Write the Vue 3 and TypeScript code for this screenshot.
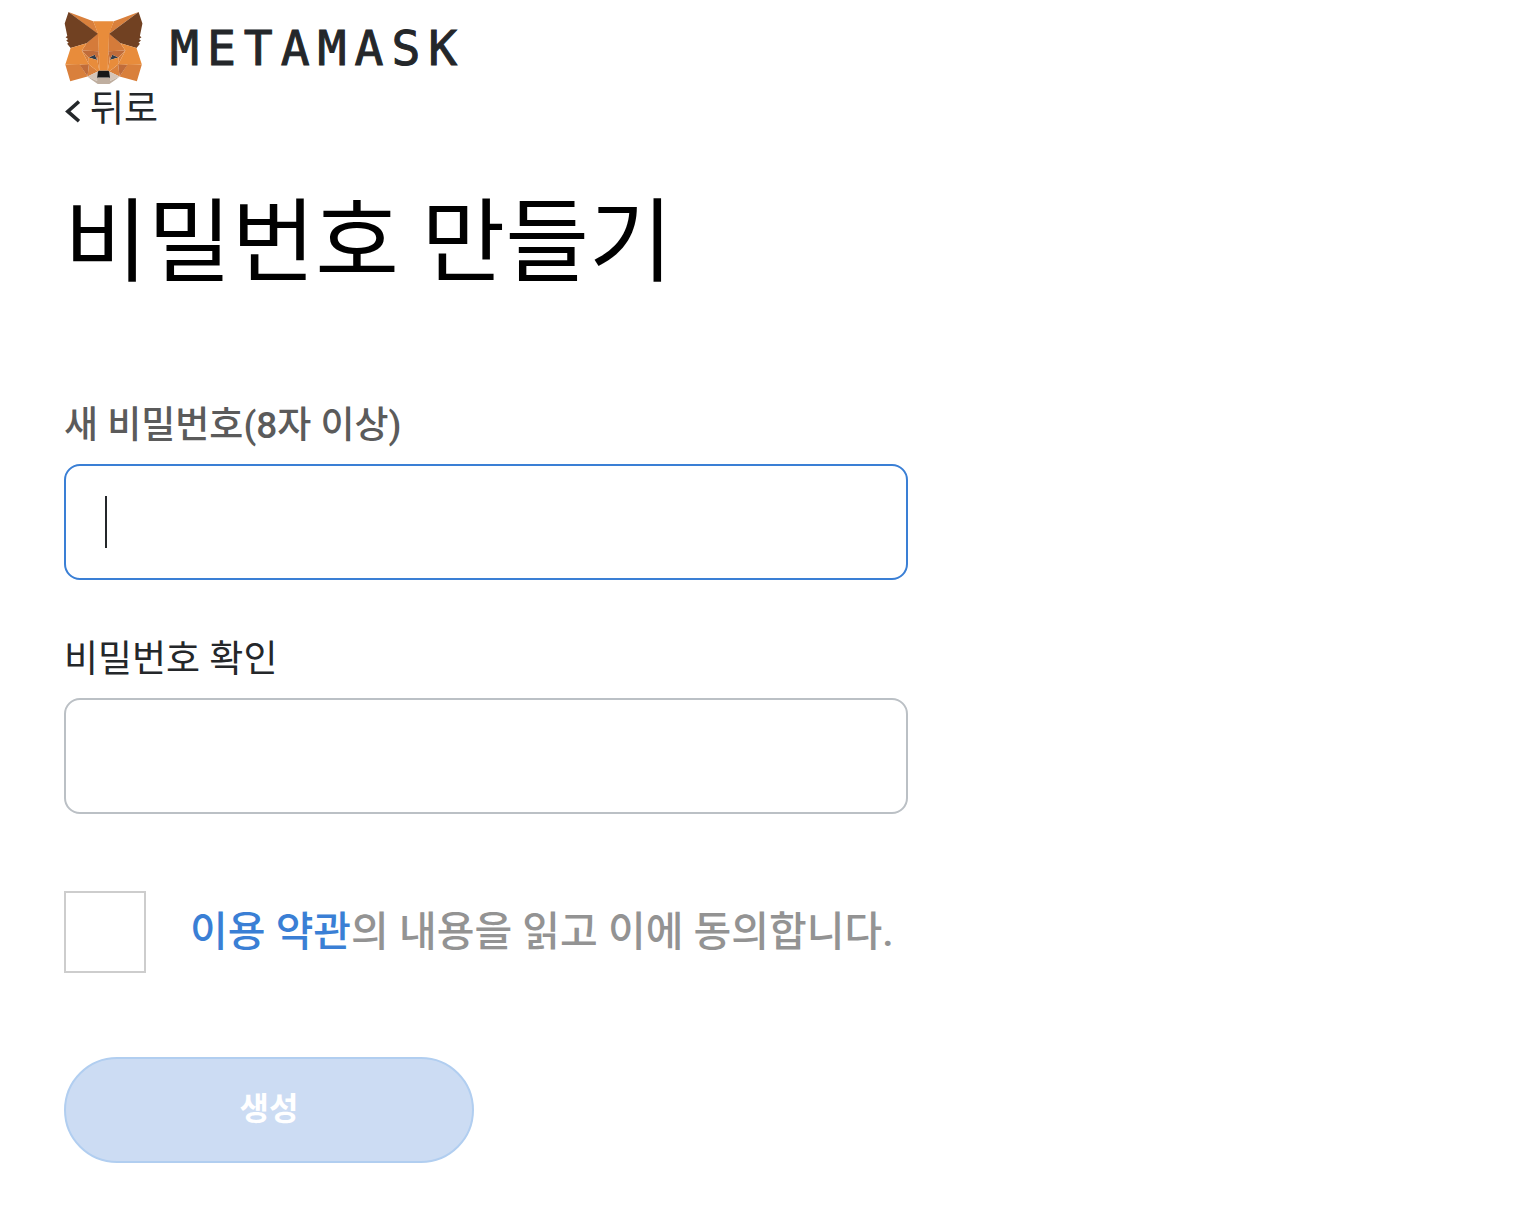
<script setup lang="ts">
import { ref } from 'vue'

interface Facet {
  fill: string
  d: string
}

const password = ref('')
const confirmPassword = ref('')
const accepted = ref(false)

const foxFacets: Facet[] = [
  { fill: '#d9803c', d: 'M32.96 1l-13.14 9.72 2.45-5.73L32.96 1z' },
  { fill: '#d9803c', d: 'M2.66 1l13.02 9.81-2.33-5.82L2.66 1z' },
  { fill: '#d9803c', d: 'M28.23 23.53l-3.5 5.34 7.49 2.06 2.14-7.28-6.13-.12z' },
  { fill: '#d9803c', d: 'M1.27 23.65l2.13 7.28 7.47-2.06-3.48-5.34-6.12.12z' },
  { fill: '#d57b3a', d: 'M10.47 14.51l-2.08 3.14 7.4.34-.24-7.97-5.08 4.49z' },
  { fill: '#d57b3a', d: 'M25.15 14.51l-5.16-4.58-.17 8.06 7.4-.34-2.07-3.14z' },
  { fill: '#d9803c', d: 'M10.87 28.87l4.49-2.16-3.86-3-.63 5.16z' },
  { fill: '#d9803c', d: 'M20.27 26.71l4.46 2.16-.6-5.17-3.86 3.01z' },
  { fill: '#d5c5b8', d: 'M24.73 28.87l-4.46-2.16.36 2.9-.04 1.23 4.14-1.97z' },
  { fill: '#d5c5b8', d: 'M10.87 28.87l4.16 1.97-.03-1.23.36-2.9-4.49 2.16z' },
  { fill: '#2f3d4b', d: 'M15.1 21.78l-3.72-1.09 2.63-1.2 1.09 2.29z' },
  { fill: '#2f3d4b', d: 'M20.51 21.78l1.09-2.29 2.64 1.2-3.73 1.09z' },
  { fill: '#c06c3a', d: 'M10.87 28.87l.65-5.34-4.13.12 3.48 5.22z' },
  { fill: '#c06c3a', d: 'M24.1 23.53l.63 5.34 3.5-5.22-4.13-.12z' },
  { fill: '#c06c3a', d: 'M27.2 17.65l-7.4.34.7 3.79 1.08-2.29 2.64 1.2 2.98-3.04z' },
  { fill: '#c06c3a', d: 'M11.38 20.69l2.63-1.2 1.09 2.29.68-3.79-7.4-.34 3 3.04z' },
  { fill: '#d9803c', d: 'M8.39 17.65l3.1 6.06-.11-3.02-3-3.04z' },
  { fill: '#d9803c', d: 'M24.24 20.69l-.12 3.02 3.1-6.06-2.98 3.04z' },
  { fill: '#d9803c', d: 'M15.78 17.99l-.68 3.79.87 4.48.19-5.9-.38-2.37z' },
  { fill: '#d9803c', d: 'M19.8 17.99l-.36 2.36.17 5.91.88-4.48-.7-3.79z' },
  { fill: '#e88c3b', d: 'M20.5 21.78l-.88 4.48.63.45 3.86-3 .12-3.02-3.73 1.09z' },
  { fill: '#e88c3b', d: 'M11.38 20.69l.1 3.02 3.87 3 .62-.45-.87-4.48-3.72-1.09z' },
  { fill: '#bfae9f', d: 'M20.6 30.84l.03-1.23-.34-.29h-4.98l-.31.29.03 1.23-4.16-1.97 1.46 1.19 2.96 2.04h5.05l2.97-2.04 1.44-1.19-4.15 1.97z' },
  { fill: '#171717', d: 'M20.27 26.71l-.63-.45h-3.66l-.62.45-.36 2.9.31-.29h4.98l.34.29-.36-2.9z' },
  { fill: '#714122', d: 'M33.52 11.35l1.1-5.36L32.96 1l-12.69 9.4 4.88 4.11 6.9 2.01 1.52-1.77-.66-.48 1.05-.96-.81-.62 1.06-.81-.7-.53z' },
  { fill: '#714122', d: 'M1 5.99l1.12 5.36-.71.53 1.06.8-.8.63 1.05.96-.67.48 1.52 1.77 6.9-2.01 4.88-4.11L2.66 1 1 5.99z' },
  { fill: '#e88c3b', d: 'M32.05 16.52l-6.9-2.01 2.07 3.14-3.1 6.06 4.1-.06h6.14l-2.31-7.13z' },
  { fill: '#e88c3b', d: 'M10.47 14.51l-6.9 2.01-2.3 7.13h6.12l4.1.06-3.1-6.06 2.08-3.14z' },
  { fill: '#e88c3b', d: 'M19.8 17.99l.44-7.64 2-5.4h-8.88l2 5.4.45 7.64.16 2.38.01 5.89h3.66l.02-5.89.14-2.38z' },
]
</script>

<template>
  <main class="page">
    <header class="brand">
      <svg class="fox" viewBox="1 1 34 32" aria-hidden="true">
        <path v-for="(facet, i) in foxFacets" :key="i" :fill="facet.fill" :d="facet.d" />
      </svg>
      <span class="wordmark">METAMASK</span>
    </header>

    <a class="back" href="#">
      <svg class="chevron" viewBox="0 0 16 28" aria-hidden="true">
        <path d="M15 5.6L3.8 15.4L15 25.2" fill="none" stroke="currentColor" stroke-width="3.6" />
      </svg>
      <span>뒤로</span>
    </a>

    <h1 class="title">비밀번호 만들기</h1>

    <form class="form" @submit.prevent>
      <div class="field">
        <label class="label label-active" for="new-password">새 비밀번호(8자 이상)</label>
        <div class="control">
          <input id="new-password" v-model="password" class="input input-active" type="password" />
          <span v-if="!password" class="caret" aria-hidden="true"></span>
        </div>
      </div>

      <div class="field">
        <label class="label" for="confirm-password">비밀번호 확인</label>
        <div class="control">
          <input id="confirm-password" v-model="confirmPassword" class="input" type="password" />
        </div>
      </div>

      <div class="terms">
        <input id="terms" v-model="accepted" class="checkbox" type="checkbox" />
        <label class="terms-text" for="terms"><a class="terms-link" href="#">이용 약관</a>의 내용을 읽고 이에 동의합니다.</label>
      </div>

      <button class="submit" type="submit" disabled>생성</button>
    </form>
  </main>
</template>

<style>
body {
  margin: 0;
  background: #fff;
}
</style>

<style scoped>
.page {
  box-sizing: border-box;
  padding: 12px 64px 46px;
  font-family: Roboto, "Noto Sans CJK KR", sans-serif;
  font-weight: 400;
  color: #24272a;
}

.brand {
  display: flex;
  align-items: flex-start;
  gap: 26px;
}

.fox {
  display: block;
  width: 80px;
  height: 74px;
}

.wordmark {
  font-family: "DejaVu Sans Mono", monospace;
  font-size: 48px;
  line-height: 72px;
  letter-spacing: 8px;
  -webkit-text-stroke: 1px currentColor;
}

.back {
  display: flex;
  align-items: center;
  gap: 10px;
  width: fit-content;
  font-size: 37px;
  line-height: 48px;
  color: inherit;
  text-decoration: none;
}

.chevron {
  width: 16px;
  height: 28px;
}

.title {
  margin: 55px 0 105px;
  font-size: 91px;
  line-height: 108px;
  font-weight: 400;
  color: #000;
}

.form {
  max-width: 844px;
}

.field {
  display: flex;
  flex-direction: column;
  gap: 14px;
  margin-bottom: 56px;
}

.label {
  font-size: 37px;
  line-height: 48px;
}

.label-active {
  font-weight: 500;
  color: #5b5b5b;
}

.control {
  position: relative;
}

.input {
  display: block;
  box-sizing: border-box;
  width: 100%;
  height: 116px;
  padding: 0 40px;
  border: 2px solid #bbc0c5;
  border-radius: 16px;
  outline: none;
  background: #fff;
  font: inherit;
  font-size: 37px;
}

.input-active {
  border-color: #3a7fd5;
}

.caret {
  position: absolute;
  top: 32px;
  left: 41px;
  width: 2px;
  height: 52px;
  background: #24272a;
}

.terms {
  display: flex;
  align-items: center;
  gap: 44px;
  margin-top: 77px;
}

.checkbox {
  appearance: none;
  box-sizing: border-box;
  flex: none;
  width: 82px;
  height: 82px;
  margin: 0;
  border: 2px solid #cdcdcd;
  background: #fff;
}

.terms-text {
  font-size: 41px;
  font-weight: 500;
  line-height: 48px;
  color: #939393;
}

.terms-link {
  color: #3a7fd5;
  text-decoration: none;
}

.submit {
  display: block;
  box-sizing: border-box;
  width: 410px;
  height: 106px;
  margin-top: 84px;
  padding: 0 0 8px;
  border: 2px solid #b1cef0;
  border-radius: 53px;
  background: #ccdcf3;
  font: inherit;
  font-size: 32px;
  font-weight: 700;
  color: #fff;
}
</style>
